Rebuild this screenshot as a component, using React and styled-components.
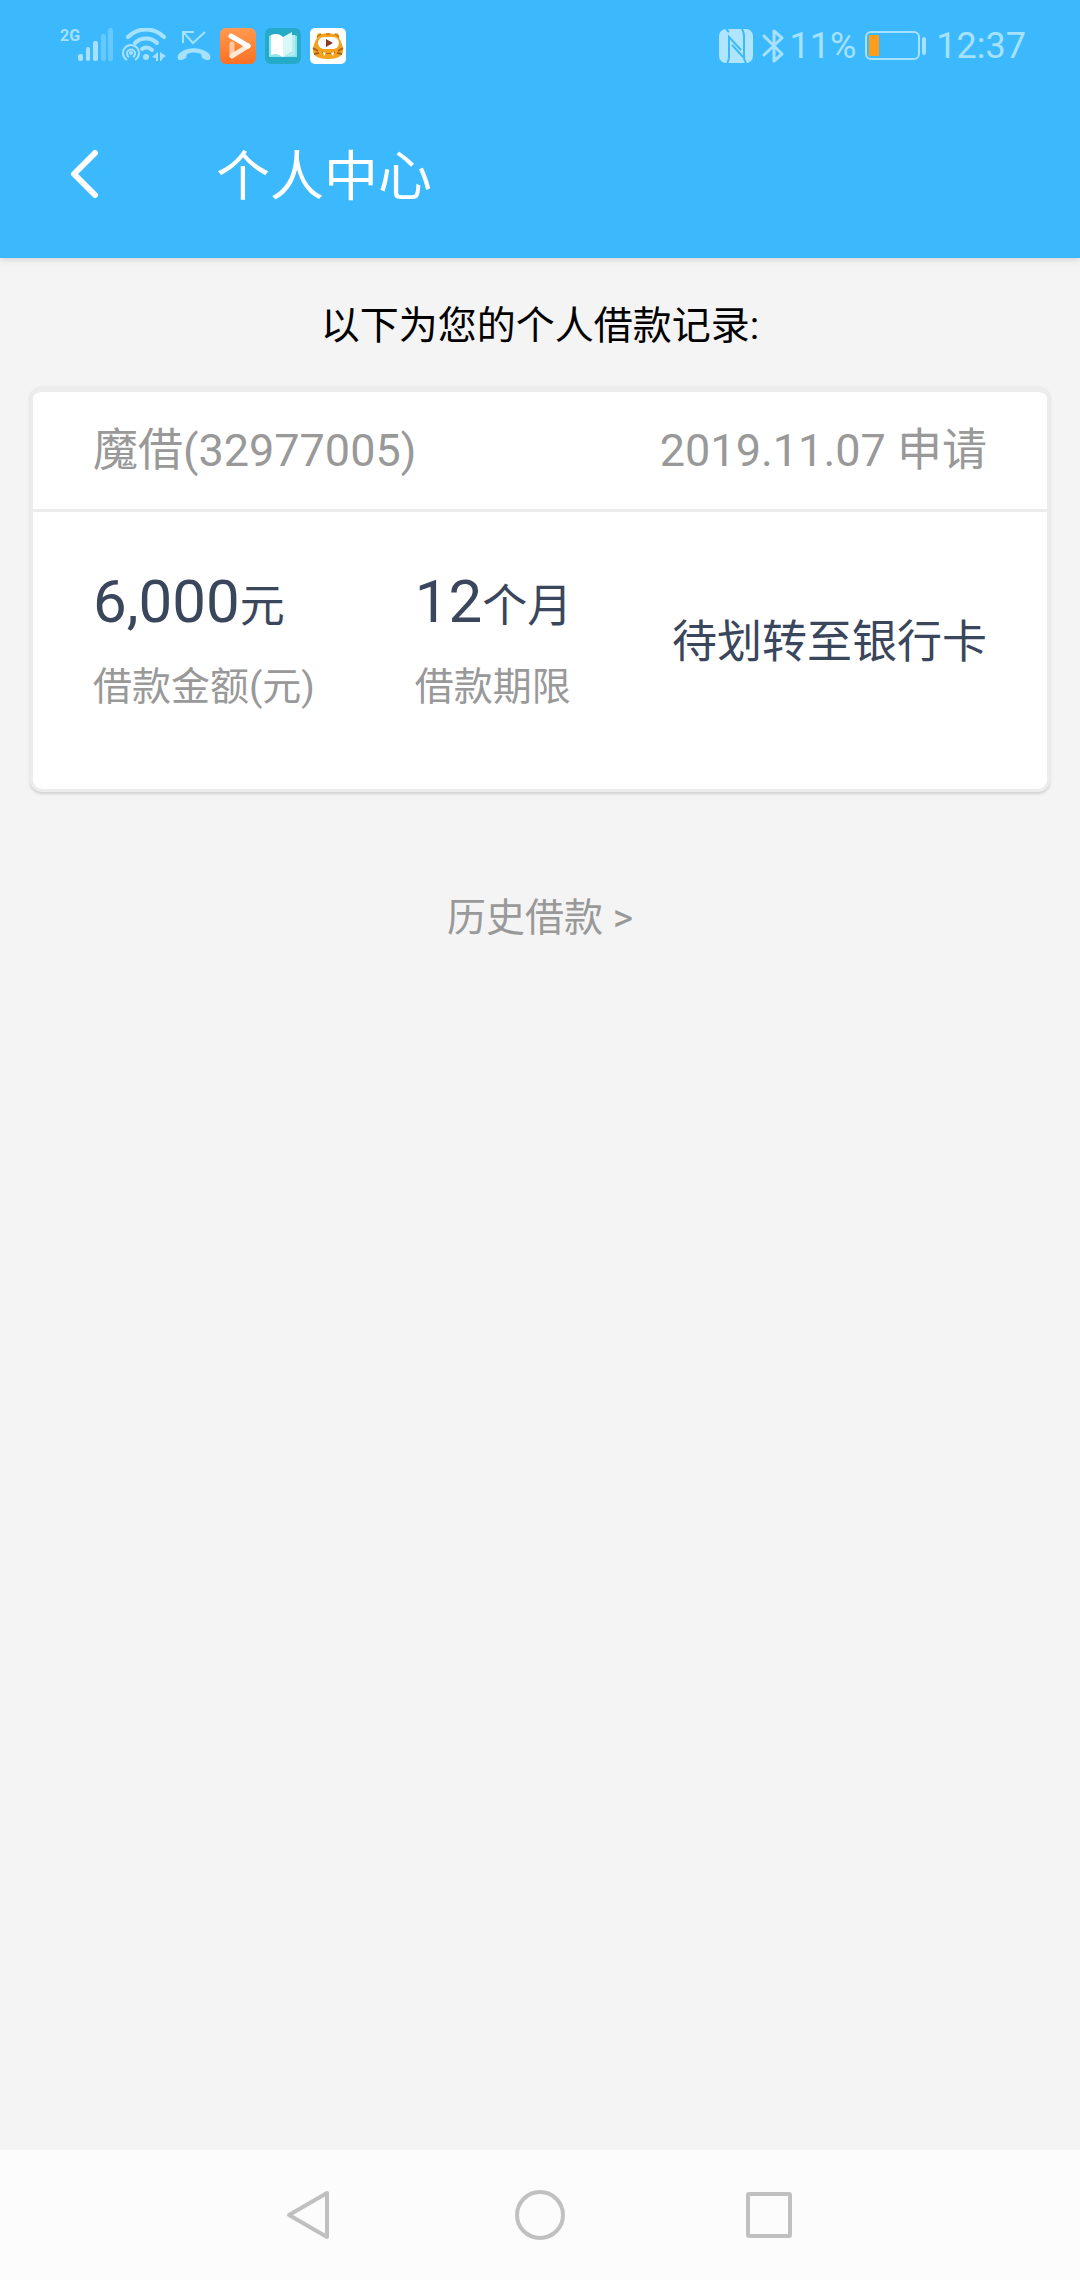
import React from 'react';
import styled, { createGlobalStyle } from 'styled-components';

const GlobalStyle = createGlobalStyle`
  * {
    box-sizing: border-box;
  }
  body {
    margin: 0;
    background: #f4f4f4;
    font-family: Roboto, 'Noto Sans CJK SC', sans-serif;
  }
`;

const Page = styled.div`
  display: flex;
  flex-direction: column;
  min-height: 100vh;
`;

const Top = styled.div`
  background: #3cb9fd;
  box-shadow: 0 2px 6px rgba(0, 0, 0, 0.12);
`;

const StatusBar = styled.div`
  display: flex;
  justify-content: space-between;
  align-items: center;
  height: 90px;
  padding: 2px 54px 0 60px;
  color: #a6e1fe;
`;

const StatusGroup = styled.div`
  display: flex;
  align-items: center;
  gap: ${({ $gap }) => $gap}px;
`;

const StatusText = styled.span`
  font-size: 36px;
  line-height: 42px;
`;

const Signal = styled.div`
  display: flex;
  height: 36px;
`;

const Network = styled.span`
  width: 18px;
  font-family: 'Liberation Sans Narrow', Roboto, sans-serif;
  font-weight: 700;
  font-size: 16px;
  line-height: 16px;
`;

const Icon = styled.svg`
  display: block;
  flex: none;
`;

const AppBar = styled.header`
  display: flex;
  align-items: center;
  gap: 86px;
  height: 168px;
  padding: 0 40px;
`;

const IconButton = styled.button`
  display: flex;
  justify-content: center;
  align-items: center;
  width: 90px;
  height: 90px;
  padding: 0;
  border: 0;
  background: none;
  cursor: pointer;
`;

const Title = styled.h1`
  margin: 0;
  padding-top: 8px;
  font-weight: 400;
  font-size: 54px;
  line-height: 78px;
  color: #ffffff;
`;

const Main = styled.main`
  flex: 1;
  display: flex;
  flex-direction: column;
  padding: 38px 30px;
`;

const Intro = styled.p`
  margin: 0;
  font-size: 39px;
  line-height: 60px;
  text-align: center;
  color: #000000;
`;

const Card = styled.section`
  margin-top: 30px;
  border: 3px solid #ececec;
  border-top-width: 6px;
  border-radius: 12px;
  background: #ffffff;
  box-shadow: 0 2px 3px rgba(0, 0, 0, 0.15);
`;

const CardHead = styled.div`
  display: flex;
  justify-content: space-between;
  align-items: center;
  height: 120px;
  padding: 0 60px;
  border-bottom: 3px solid #ececec;
  font-size: 45px;
  line-height: 66px;
  color: #999999;
`;

const CardBody = styled.div`
  display: flex;
  justify-content: space-between;
  padding: 51px 60px 73px;
`;

const Figure = styled.div`
  display: flex;
  flex-direction: column;
  gap: 18px;
`;

const Value = styled.div`
  font-size: 60px;
  line-height: 78px;
  color: #3a465c;
`;

const Unit = styled.span`
  font-size: 45px;
  line-height: 66px;
`;

const Label = styled.div`
  font-size: 39px;
  line-height: 57px;
  color: #999999;
`;

const State = styled.div`
  align-self: center;
  padding-top: 6px;
  font-size: 45px;
  line-height: 66px;
  color: #3a465c;
`;

const History = styled.a`
  align-self: center;
  margin-top: 96px;
  font-size: 39px;
  line-height: 60px;
  color: #999999;
  text-decoration: none;
`;

const NavBar = styled.nav`
  display: flex;
  justify-content: center;
  align-items: center;
  gap: 139px;
  height: 130px;
  background: #fcfcfc;
`;

function SignalIcon() {
  return (
    <Icon width="35" height="36" viewBox="0 0 35 36" fill="currentColor">
      <rect x="0" y="26" width="5" height="7" rx="2" />
      <rect x="8" y="19" width="4" height="14" rx="2" />
      <rect x="15" y="13" width="5" height="20" rx="2" />
      <rect x="23" y="6" width="5" height="27" rx="2" opacity="0.4" />
      <rect x="30" y="0" width="5" height="33" rx="2" opacity="0.4" />
    </Icon>
  );
}

function WifiIcon() {
  return (
    <Icon width="46" height="36" viewBox="0 0 46 36" fill="none" stroke="currentColor">
      <g strokeWidth="4" strokeLinecap="round">
        <path d="M6 9C16 -1 32 -1 42 9" />
        <path d="M13 15C19 9 29 9 35 15" />
        <path d="M20 21C23 19 27 19 30 22" />
      </g>
      <g strokeWidth="2">
        <path d="M5 32A8 8 0 1 1 13 32" />
        <path d="M7 29A4 4 0 1 1 11 29" />
      </g>
      <g fill="currentColor" stroke="none">
        <circle cx="9" cy="25" r="2" />
        <circle cx="24" cy="29" r="3" />
        <path d="M36 24V33H34V30L30 29ZM38 24L44 28L41 30L39 33H38Z" />
      </g>
    </Icon>
  );
}

function MissedCallIcon() {
  return (
    <Icon width="34" height="36" viewBox="0 0 34 36" fill="none">
      <path d="M28 4L16 15L7 5M6 15V4H17" stroke="currentColor" strokeWidth="2" />
      <path
        d="M1 31C0 28 1 26 4 24C12 19 22 19 30 24C33 26 34 28 33 31C32 33 28 32 25 30L24 26C19 24 15 24 10 26L9 30C6 32 2 33 1 31Z"
        fill="currentColor"
      />
    </Icon>
  );
}

function VideoAppIcon() {
  return (
    <Icon width="36" height="36" viewBox="0 0 36 36">
      <defs>
        <linearGradient id="orange" x1="0" y1="0" x2="0" y2="1">
          <stop offset="0" stopColor="#ff9a50" />
          <stop offset="1" stopColor="#fb7023" />
        </linearGradient>
      </defs>
      <rect width="36" height="36" rx="6" fill="url(#orange)" />
      <g fill="none" strokeWidth="5" strokeLinecap="round" strokeLinejoin="round">
        <path d="M12 16V26" stroke="#ffc99f" />
        <path d="M28 18L12 28" stroke="#ffe9d9" />
        <path d="M11 8L28 18" stroke="#ffffff" />
      </g>
    </Icon>
  );
}

function ReaderAppIcon() {
  return (
    <Icon width="36" height="36" viewBox="0 0 36 36">
      <rect width="36" height="36" rx="6" fill="#25abc8" />
      <path d="M4 8L6 7V27H30V7L32 8V29H4Z" fill="#8fe3ea" />
      <path d="M6 7C11 5 15 6 18 9V29C14 26 10 26 6 27Z" fill="#ffffff" />
      <path d="M18 9L27 4V24L18 29Z" fill="#d8f8f8" />
      <path d="M27 7H30V27L18 29L27 24Z" fill="#b5eeee" />
    </Icon>
  );
}

function TigerAppIcon() {
  return (
    <Icon width="36" height="36" viewBox="0 0 36 36">
      <rect width="36" height="36" rx="5" fill="#ffffff" />
      <path
        d="M7 10C6 6 9 4 12 6C16 5 20 5 24 6C27 4 30 6 29 10C31 13 33 18 33 22C33 28 28 31 18 31C8 31 3 28 3 22C3 18 5 13 7 10Z"
        fill="#f5a21f"
      />
      <path d="M7 9L11 6M29 9L25 6M16 6H20" stroke="#a8601a" strokeWidth="1" />
      <path d="M3 20L8 23M4 26L9 25M33 20L28 23M32 26L27 25" stroke="#a8601a" strokeWidth="2" />
      <rect x="8" y="9" width="21" height="12" rx="6" fill="#ffffff" />
      <path d="M16 11L23 15L16 19Z" fill="#8a3a26" />
      <path d="M12 24C15 26 21 26 25 24" fill="none" stroke="#a8601a" strokeWidth="1" />
      <path d="M13 24L16 25L14 28ZM21 25L24 24L23 28Z" fill="#ffffff" />
    </Icon>
  );
}

function NfcIcon() {
  return (
    <Icon width="34" height="34" viewBox="0 0 34 34" fill="none">
      <rect width="34" height="34" rx="7" fill="#b0e5ff" />
      <g stroke="#3cb9fd" strokeWidth="2">
        <path d="M8 34C10 32 10 29 10 26V8L22 21" />
        <path d="M23 0C25 3 25 5 25 8V29L13 16" />
        <path d="M7 0L10 3M25 30L27 34" />
      </g>
    </Icon>
  );
}

function BluetoothIcon() {
  return (
    <Icon width="22" height="36" viewBox="0 0 22 36" fill="none">
      <path
        d="M2 8L20 26L12 33V3L20 10L2 27"
        stroke="currentColor"
        strokeWidth="3"
        strokeLinecap="round"
        strokeLinejoin="round"
      />
    </Icon>
  );
}

function BatteryIcon() {
  return (
    <Icon width="62" height="30" viewBox="0 0 62 30" fill="none">
      <rect x="1" y="1" width="53" height="27" rx="5" stroke="currentColor" strokeWidth="2" />
      <rect x="4" y="4" width="10" height="21" rx="1" fill="#ff9c1a" />
      <rect x="57" y="6" width="4" height="18" rx="2" fill="currentColor" />
    </Icon>
  );
}

function BackIcon() {
  return (
    <Icon width="30" height="50" viewBox="0 0 30 50" fill="none">
      <path
        d="M25 4L4 25L25 46"
        stroke="#ffffff"
        strokeWidth="6"
        strokeLinecap="round"
        strokeLinejoin="round"
      />
    </Icon>
  );
}

function NavIcon({ children }) {
  return (
    <Icon
      width="52"
      height="52"
      viewBox="0 0 52 52"
      fill="none"
      stroke="#c0c0c0"
      strokeWidth="4"
      strokeLinejoin="round"
    >
      {children}
    </Icon>
  );
}

function LoanFigure({ value, unit, label }) {
  return (
    <Figure>
      <Value>
        {value}
        <Unit>{unit}</Unit>
      </Value>
      <Label>{label}</Label>
    </Figure>
  );
}

function App() {
  return (
    <Page>
      <GlobalStyle />
      <Top>
        <StatusBar>
          <StatusGroup $gap={9}>
            <Signal>
              <Network>2G</Network>
              <SignalIcon />
            </Signal>
            <WifiIcon />
            <MissedCallIcon />
            <VideoAppIcon />
            <ReaderAppIcon />
            <TigerAppIcon />
          </StatusGroup>
          <StatusGroup $gap={9}>
            <NfcIcon />
            <StatusGroup $gap={6}>
              <BluetoothIcon />
              <StatusText>11%</StatusText>
            </StatusGroup>
            <BatteryIcon />
            <StatusText>12:37</StatusText>
          </StatusGroup>
        </StatusBar>
        <AppBar>
          <IconButton aria-label="返回">
            <BackIcon />
          </IconButton>
          <Title>个人中心</Title>
        </AppBar>
      </Top>
      <Main>
        <Intro>以下为您的个人借款记录:</Intro>
        <Card>
          <CardHead>
            <span>魔借(32977005)</span>
            <span>2019.11.07 申请</span>
          </CardHead>
          <CardBody>
            <LoanFigure value="6,000" unit="元" label="借款金额(元)" />
            <LoanFigure value="12" unit="个月" label="借款期限" />
            <State>待划转至银行卡</State>
          </CardBody>
        </Card>
        <History href="#history">历史借款 &gt;</History>
      </Main>
      <NavBar>
        <IconButton aria-label="后退">
          <NavIcon>
            <path d="M42 4V48L4 26Z" />
          </NavIcon>
        </IconButton>
        <IconButton aria-label="主页">
          <NavIcon>
            <circle cx="26" cy="26" r="23" />
          </NavIcon>
        </IconButton>
        <IconButton aria-label="最近任务">
          <NavIcon>
            <rect x="5" y="5" width="42" height="42" rx="1" />
          </NavIcon>
        </IconButton>
      </NavBar>
    </Page>
  );
}

export default App;
